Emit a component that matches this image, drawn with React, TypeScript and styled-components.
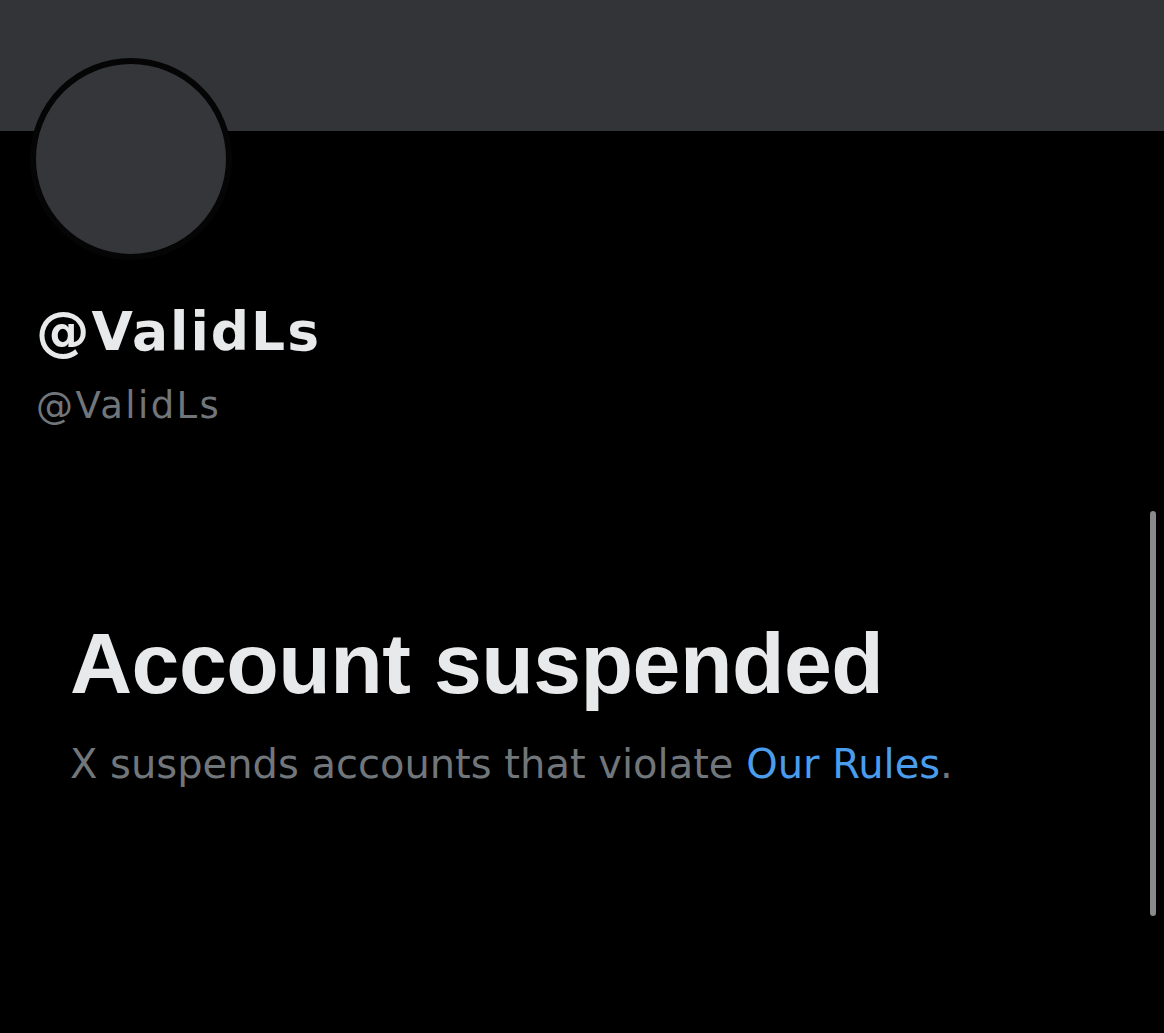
import React from "react";
import styled, { createGlobalStyle } from "styled-components";

const Global = createGlobalStyle`
  html, body { margin: 0; padding: 0; background: #000; }
  body { font-family: "Liberation Sans", Arial, sans-serif; }
`;

const Page = styled.div`
  position: relative;
  width: 1164px;
  height: 1033px;
  background: #000;
  overflow: hidden;
`;

const Banner = styled.div`
  height: 131px;
  background: #333438;
`;

const Profile = styled.div`
  display: flex;
  flex-direction: column;
  padding-left: 30px;
`;

const Avatar = styled.div`
  width: 190px;
  height: 190px;
  margin-top: -73px;
  border: 6px solid #050506;
  border-radius: 50%;
  background: #35363a;
`;

const Names = styled.div`
  display: flex;
  flex-direction: column;
  padding-left: 6px;
  margin-top: 45px;
  gap: 28px;
`;

const DisplayName = styled.div`
  font-family: "DejaVu Sans", "Liberation Sans", sans-serif;
  font-size: 53.5px;
  line-height: 1;
  font-weight: 700;
  color: #e7e9ea;
  letter-spacing: 2px;
`;

const Handle = styled.div`
  font-family: "DejaVu Sans", "Liberation Sans", sans-serif;
  font-size: 37px;
  line-height: 1;
  color: #71767b;
  letter-spacing: 2.4px;
`;

const Notice = styled.div`
  display: flex;
  flex-direction: column;
  gap: 38px;
  padding-left: 70px;
  margin-top: 196px;
`;

const Title = styled.h1`
  margin: 0;
  font-size: 86px;
  line-height: 1;
  font-weight: 700;
  color: #e7e9ea;
  letter-spacing: -0.5px;
`;

const Sub = styled.p`
  margin: 0;
  font-family: "DejaVu Sans", "Liberation Sans", sans-serif;
  font-size: 40px;
  line-height: 1;
  color: #71767b;
  letter-spacing: 0;
`;

const RulesLink = styled.a`
  color: #4a9cec;
  text-decoration: none;
`;

const Scrollbar = styled.div`
  position: absolute;
  left: 1150px;
  top: 511px;
  width: 6px;
  height: 405px;
  border-radius: 3px;
  background: #8a8a8c;
`;

export default function App() {
  return (
    <Page>
      <Global />
      <Banner />
      <Profile>
        <Avatar />
        <Names>
          <DisplayName>@ValidLs</DisplayName>
          <Handle>@ValidLs</Handle>
        </Names>
      </Profile>
      <Notice>
        <Title>Account suspended</Title>
        <Sub>
          X suspends accounts that violate <RulesLink>Our Rules</RulesLink>.
        </Sub>
      </Notice>
      <Scrollbar />
    </Page>
  );
}
